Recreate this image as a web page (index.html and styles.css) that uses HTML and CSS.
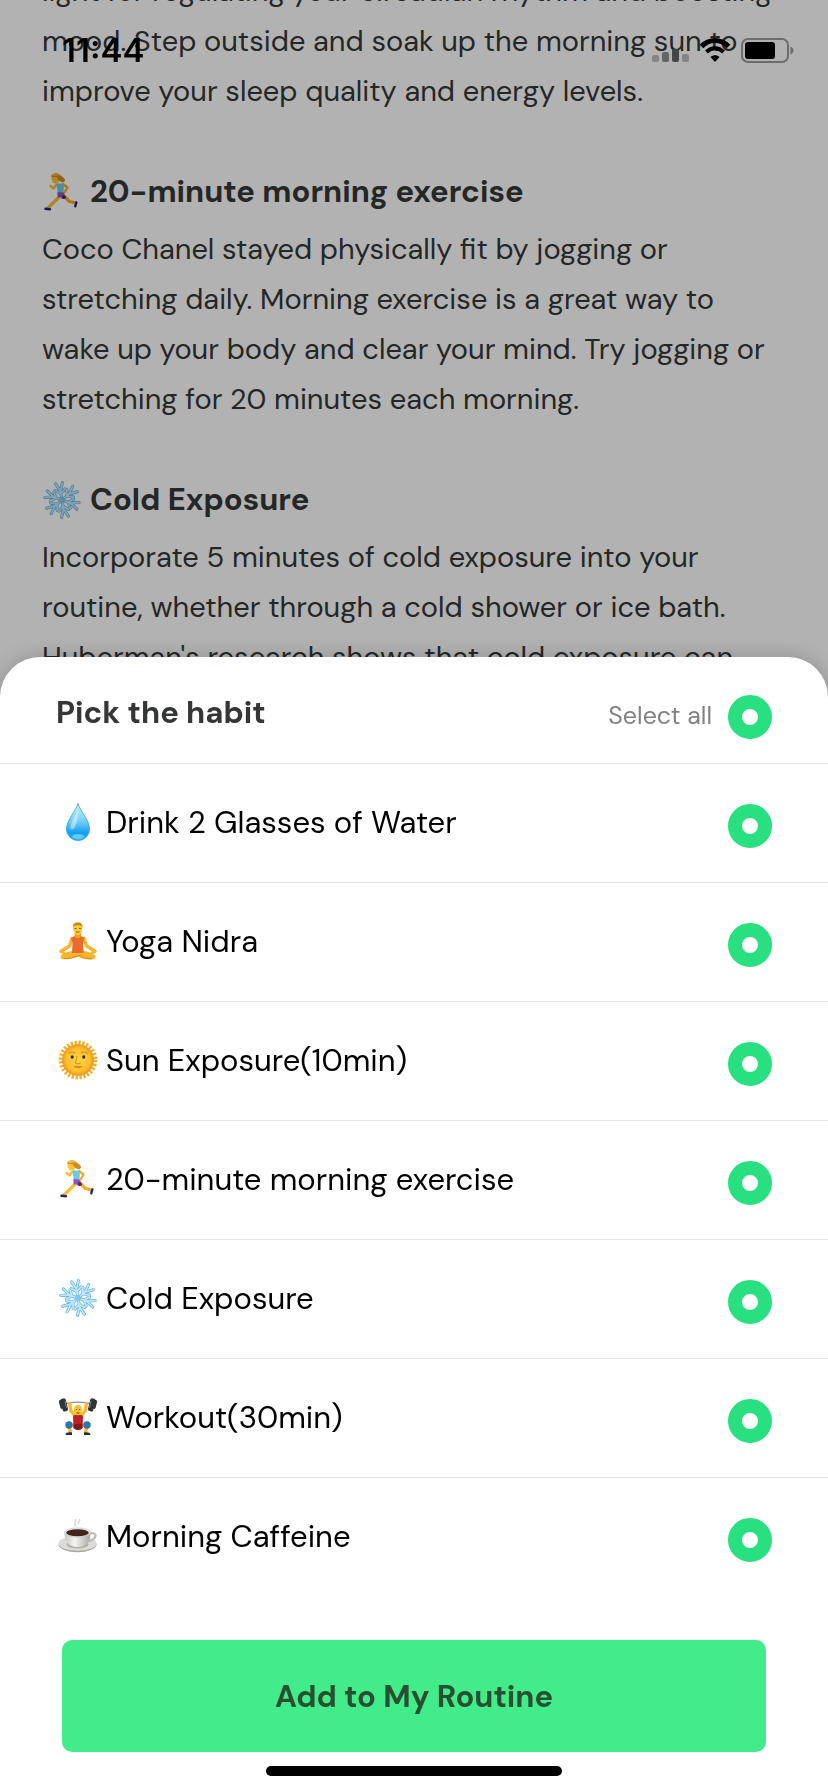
FILE: index.html
```html
<!DOCTYPE html>
<html lang="en">
<head>
  <meta charset="UTF-8" />
  <meta name="viewport" content="width=device-width, initial-scale=1.0" />
  <title>Pick the habit</title>
  <link rel="stylesheet" href="styles.css">
</head>
<body>
  <!-- Icon set -->
  <svg class="sprite" aria-hidden="true">
    <defs>
      <linearGradient id="dropFill" x1="0" y1="0" x2="0" y2="1">
        <stop offset="0" stop-color="#d9f3fd" />
        <stop offset="0.5" stop-color="#6fcbf7" />
        <stop offset="0.8" stop-color="#129df0" />
        <stop offset="1" stop-color="#35b9f8" />
      </linearGradient>
      <radialGradient id="sunFill">
        <stop offset="0" stop-color="#ffd54a" />
        <stop offset="0.75" stop-color="#fdbf2d" />
        <stop offset="1" stop-color="#ee981d" />
      </radialGradient>
      <linearGradient id="cupFill">
        <stop offset="0" stop-color="#c9c7c1" />
        <stop offset="0.4" stop-color="#f6f5f2" />
        <stop offset="1" stop-color="#aaa7a0" />
      </linearGradient>
    </defs>

    <symbol id="drop" viewBox="0 0 40 40">
      <path d="M20 1.500C22 9 31.500 18 31.500 27a11.500 11.500 0 0 1-23 0C8.500 18 18 9 20 1.500z" fill="url(#dropFill)" stroke="#1ba1e8" stroke-width="0.8" />
      <path d="M19.500 8C18 14 12.500 20 12.500 26c0 3 4 1 5-2 1.500-5 3-9 2-16z" fill="#fff" opacity="0.45" />
      <ellipse cx="20" cy="34.500" rx="6" ry="2.500" fill="#6bd3fb" opacity="0.8" />
    </symbol>

    <symbol id="yoga" viewBox="0 0 40 40">
      <g fill="none" stroke="#f5b52c" stroke-linecap="round" stroke-linejoin="round">
        <path d="M14 17.500L11.500 25 3.500 30" stroke-width="3.400" />
        <path d="M26 17.500L28.500 25 36.500 30" stroke-width="3.400" />
        <path d="M2.500 30.500l3.500 1.500M37.500 30.500L34 32" stroke-width="2.600" />
        <path d="M14 32C9 33 5 34 4.500 36c5 1.500 11-1 17-3" stroke-width="4" />
        <path d="M26 32c5 1 9 2 9.500 4-5 1.500-11-.5-15-2.500" stroke-width="4" />
      </g>
      <path d="M6 37.500c8 .5 12-3 18-3.500M34 37.500c-5 .5-8-.5-11-2" stroke="#d88913" stroke-width="0.900" fill="none" />
      <path d="M16.500 12h6.500v6h-6.500z" fill="#eda51f" />
      <path d="M13 17l3.500-2c1 3 5.500 3 6.500 0l3.500 2-1.500 5 .5 10H14l.5-10z" fill="#ea6a2c" />
      <path d="M15 5.500c0-5.500 9.500-5.500 9.500 0 0 4.500-1.500 8.500-4.700 8.500S15 10 15 5.500z" fill="#fdca36" />
      <path d="M15 5.500C14.500 0 25 0 24.500 5.500 22.500 3.500 18 4 15 5.500z" fill="#c78a18" />
      <path d="M16.500 7.500h2M21 7.500h2M18 11h3.500" stroke="#7b4d10" stroke-width="0.900" />
    </symbol>

    <symbol id="sun" viewBox="0 0 40 40">
      <circle cx="20" cy="20" r="17.300" fill="none" stroke="#f5ad28" stroke-width="4.200" stroke-dasharray="2.200 1.682" />
      <circle cx="20" cy="20" r="15.600" fill="url(#sunFill)" stroke="#e99a20" stroke-width="0.700" />
      <path d="M10.500 13.500c2-2 5-2 6.500-.5M23 13c2-1.500 5-1.500 6.500.5" stroke="#d78b16" stroke-width="1.100" fill="none" />
      <ellipse cx="14" cy="17" rx="2.600" ry="1.500" fill="#ffe9a8" />
      <ellipse cx="26" cy="17" rx="2.600" ry="1.500" fill="#ffe9a8" />
      <circle cx="14.200" cy="17" r="1.700" fill="#3c2a15" />
      <circle cx="25.800" cy="17" r="1.700" fill="#3c2a15" />
      <path d="M19 16l-1.500 7c1 1.200 4 1.200 5 0" stroke="#dc8c16" stroke-width="1.100" fill="none" />
      <path d="M15 26.500c3 2 7 2 10 0-3-.6-7-.6-10 0z" fill="#d98a1c" />
    </symbol>

    <symbol id="runner" viewBox="0 0 40 40">
      <g fill="none" stroke-linecap="round" stroke-linejoin="round">
        <path d="M22 24l5.500 5.500 6.500 1.500" stroke="#f3ac27" stroke-width="3.200" />
        <path d="M18.500 24l-7 6.500-5.500 5.500" stroke="#fbbe31" stroke-width="3.200" />
        <path d="M21 12l4.500 3.500-3 5" stroke="#f3ac27" stroke-width="2.400" />
        <path d="M14 13l-2.500 3.500L8.500 14" stroke="#fbbe31" stroke-width="2.400" />
        <path d="M3.500 36.800l4.500.4M34.300 30.500l-1 3.800" stroke="#26236e" stroke-width="2.400" />
      </g>
      <path d="M14.500 11l7.500 1-.5 9-6-.5c.5-3-1.500-6-1-9.500z" fill="#6dc8e2" />
      <path d="M15.500 20l6 .5 2.500 5-3.500 1.500-2.500-2-2.500 1z" fill="#8d55bd" />
      <path d="M20 23l3.500 1 .5 2.500-3.500.5z" fill="#512070" />
      <path d="M9.500 5c0-3.500 7-4 8.500 0 .5 4-2 6.500-5 6.500-2.500 0-3.500-3-3.500-6.500z" fill="#fcc238" />
      <path d="M9 4c2-4 8-3.500 9.500-.5 2 1.500 4 2 4.500 4.500-.3 2.500-3 3-4.500 1.500C15.500 8.500 16 6 14.500 5 12 4.500 10.500 6 9 4z" fill="#cf8b1b" />
      <path d="M9 4c2-4 8-3.500 9.500-.5C15 3 12 4.500 9 4z" fill="#f2b93b" />
    </symbol>

    <symbol id="snow" viewBox="0 0 40 40">
      <g fill="none" stroke-linecap="round">
        <g stroke="#5aaedd" stroke-width="3">
          <path id="arm" d="M20 20V10M20 11l-3.500-8M20 11l3.500-8M20 13.500l-5-4M20 13.500l5-4" transform="rotate(-10 20 20)" />
          <use href="#arm" transform="rotate(60 20 20)" />
          <use href="#arm" transform="rotate(120 20 20)" />
          <use href="#arm" transform="rotate(180 20 20)" />
          <use href="#arm" transform="rotate(240 20 20)" />
          <use href="#arm" transform="rotate(300 20 20)" />
        </g>
        <g stroke="#bfe8fc" stroke-width="1.800">
          <path id="armLight" d="M20 20V10M20 11l-3.500-8M20 11l3.500-8M20 13.500l-5-4M20 13.500l5-4" transform="rotate(-10 20 20)" />
          <use href="#armLight" transform="rotate(60 20 20)" />
          <use href="#armLight" transform="rotate(120 20 20)" />
          <use href="#armLight" transform="rotate(180 20 20)" />
          <use href="#armLight" transform="rotate(240 20 20)" />
          <use href="#armLight" transform="rotate(300 20 20)" />
        </g>
      </g>
      <circle cx="20" cy="20" r="3" fill="#7cc8ee" />
    </symbol>

    <symbol id="lifter" viewBox="0 0 40 40">
      <path d="M5 7.500C14 4.500 26 4.500 35 7.500" fill="none" stroke="#8b8f94" stroke-width="1.600" />
      <g fill="none" stroke="#f8b92f" stroke-width="3.400" stroke-linecap="round" stroke-linejoin="round">
        <path d="M11.500 6.500L13 14l4 5" />
        <path d="M28.500 6.500L27 14l-4 5" />
        <path d="M17 28l-6 .5 1.500 7" />
        <path d="M23 28l6 .5-1.500 7" />
      </g>
      <g fill="#30353a">
        <rect x="3.500" y="1.500" width="5.500" height="13" rx="2" transform="rotate(-14 6 8)" />
        <rect x="31" y="1.500" width="5.500" height="13" rx="2" transform="rotate(14 34 8)" />
        <rect x="1.500" y="3" width="3" height="9" rx="1.500" transform="rotate(-14 3 7)" />
        <rect x="35.500" y="3" width="3" height="9" rx="1.500" transform="rotate(14 37 7)" />
      </g>
      <path d="M7 4l1.500 7M33 4l-1.500 7" stroke="#747a80" stroke-width="1" />
      <path d="M15 19c3-2 7-2 10 0l-.5 12c-2 2.500-7 2.500-9 0z" fill="#bd2026" />
      <path d="M16 27h8l.5 4c-3 2.500-6 2.500-9 0z" fill="#841720" />
      <ellipse cx="20" cy="13" rx="4.200" ry="5.200" fill="#fdc432" />
      <path d="M18 12.500h1M21 12.500h1M18.500 16h3" stroke="#70470f" stroke-width="1" />
      <circle cx="11" cy="28" r="3.700" fill="#2b75ae" />
      <circle cx="29" cy="28" r="3.700" fill="#2b75ae" />
      <path d="M7.500 38c0-2.500 3-3 6.500-2.500v2.500zM32.500 38c0-2.500-3-3-6.500-2.500v2.500z" fill="#22313d" />
    </symbol>

    <symbol id="coffee" viewBox="0 0 40 40">
      <ellipse cx="19.500" cy="28.500" rx="19" ry="7.800" fill="#aaa79f" />
      <ellipse cx="19.500" cy="27.500" rx="19" ry="7.300" fill="#dddbd6" />
      <ellipse cx="19.500" cy="28.500" rx="11" ry="4" fill="#b3b0a9" />
      <path d="M31 18c6-2 8 1 5.500 4-1.500 2-4 3-7 3.500" fill="none" stroke="#b9b7b1" stroke-width="2" />
      <path d="M6.500 16.500c0 8 3 14.500 13 14.500s13-6.500 13-14.500z" fill="url(#cupFill)" />
      <ellipse cx="19.500" cy="16.500" rx="13" ry="4.600" fill="#efeeea" stroke="#bbb8b1" stroke-width="0.600" />
      <ellipse cx="19.500" cy="16.800" rx="11.400" ry="3.500" fill="#42241c" />
      <path d="M18 10c-4-3 2-4-1-7M21 8c-3-2 3-3 0-5" fill="none" stroke="#d5d7d8" stroke-width="1.300" />
    </symbol>
  </svg>

  <header class="status-bar">
    <span class="time">11:44</span>
    <div class="status-icons">
      <svg class="signal" viewBox="0 0 37 24" aria-hidden="true">
        <rect x="0" y="17" width="7" height="7" rx="2" fill="#858585" />
        <rect x="10" y="14" width="7" height="10" rx="2" fill="#656565" />
        <rect x="20" y="11" width="7" height="13" rx="2" fill="#454545" />
        <rect x="30" y="16" width="7" height="8" rx="2" fill="#858585" />
      </svg>
      <svg class="wifi" viewBox="0 0 32 24" aria-hidden="true">
        <path d="M2.500 8.500C10 .5 22 .5 29.500 8.500" fill="none" stroke="#000" stroke-width="5" />
        <path d="M7.500 14C12.500 9 19.500 9 24.500 14" fill="none" stroke="#000" stroke-width="4" />
        <path d="M16 24l-4.500-5c2.500-2.400 6.500-2.400 9 0z" />
      </svg>
      <svg class="battery" viewBox="0 0 53 25" aria-hidden="true">
        <rect x="1" y="1" width="46" height="23" rx="6" fill="none" stroke="#6d6d6d" stroke-width="2" />
        <rect x="4" y="4" width="30" height="17" rx="3" />
        <path d="M49.500 8.500c4 1.500 4 6.500 0 8z" fill="#6d6d6d" />
      </svg>
    </div>
  </header>

  <main class="article">
    <p>light for regulating your circadian rhythm and boosting<br>mood. Step outside and soak up the morning sun to<br>improve your sleep quality and energy levels.</p>

    <h2><svg class="icon" aria-hidden="true"><use href="#runner" /></svg>20-minute morning exercise</h2>
    <p>Coco Chanel stayed physically fit by jogging or<br>stretching daily. Morning exercise is a great way to<br>wake up your body and clear your mind. Try jogging or<br>stretching for 20 minutes each morning.</p>

    <h2><svg class="icon" aria-hidden="true"><use href="#snow" /></svg>Cold Exposure</h2>
    <p>Incorporate 5 minutes of cold exposure into your<br>routine, whether through a cold shower or ice bath.<br>Huberman's research shows that cold exposure can</p>
  </main>

  <div class="overlay"></div>

  <!-- Bottom sheet -->
  <form class="sheet">
    <div class="sheet-header">
      <h1>Pick the habit</h1>
      <label class="select-all"><span>Select all</span><input class="dot" type="checkbox" checked></label>
    </div>

    <label class="habit">
      <svg class="icon" aria-hidden="true"><use href="#drop" /></svg>
      <span class="name">Drink 2 Glasses of Water</span>
      <input class="dot" type="checkbox" checked>
    </label>
    <label class="habit">
      <svg class="icon" aria-hidden="true"><use href="#yoga" /></svg>
      <span class="name">Yoga Nidra</span>
      <input class="dot" type="checkbox" checked>
    </label>
    <label class="habit">
      <svg class="icon" aria-hidden="true"><use href="#sun" /></svg>
      <span class="name">Sun Exposure(10min)</span>
      <input class="dot" type="checkbox" checked>
    </label>
    <label class="habit">
      <svg class="icon" aria-hidden="true"><use href="#runner" /></svg>
      <span class="name">20-minute morning exercise</span>
      <input class="dot" type="checkbox" checked>
    </label>
    <label class="habit">
      <svg class="icon" aria-hidden="true"><use href="#snow" /></svg>
      <span class="name">Cold Exposure</span>
      <input class="dot" type="checkbox" checked>
    </label>
    <label class="habit">
      <svg class="icon" aria-hidden="true"><use href="#lifter" /></svg>
      <span class="name">Workout(30min)</span>
      <input class="dot" type="checkbox" checked>
    </label>
    <label class="habit">
      <svg class="icon" aria-hidden="true"><use href="#coffee" /></svg>
      <span class="name">Morning Caffeine</span>
      <input class="dot" type="checkbox" checked>
    </label>

    <button class="add-btn" type="button">Add to My Routine</button>
    <div class="home-bar"></div>
  </form>
</body>
</html>
```
FILE: styles.css
```css
* {
  box-sizing: border-box;
}

body {
  margin: 0;
  height: 100vh;
  overflow: hidden;
  background: #fff;
  color: #353737;
  font-family: "DM Sans", Lato, sans-serif;
}

.sprite {
  position: absolute;
  width: 0;
  height: 0;
}

/* Status bar, stays above the dimmed page */
.status-bar {
  position: fixed;
  top: 0;
  left: 0;
  right: 0;
  z-index: 3;
  display: flex;
  justify-content: space-between;
  align-items: center;
  height: 100px;
  padding: 0 34px 0 62px;
  color: #000;
}

.time {
  font-family: Inter, sans-serif;
  font-size: 33px;
  font-weight: 600;
}

.status-icons {
  display: flex;
  align-items: center;
  gap: 10px;
}

.signal {
  width: 37px;
  height: 24px;
}

.wifi {
  width: 32px;
  height: 24px;
}

.battery {
  width: 53px;
  height: 25px;
}

/* Article, scrolled part way */
.article {
  margin-top: -34px;
  padding: 0 42px;
}

.article p {
  margin: 0;
  font-size: 29px;
  line-height: 50px;
  white-space: nowrap;
}

.article h2 {
  display: flex;
  align-items: center;
  gap: 8px;
  margin: 56px 0 12px;
  font-size: 31px;
  line-height: 40px;
}

.icon {
  flex: none;
  width: 40px;
  height: 40px;
}

.overlay {
  position: fixed;
  inset: 0;
  z-index: 1;
  background: rgba(0, 0, 0, 0.3);
}

/* Sheet */
.sheet {
  position: fixed;
  left: 0;
  right: 0;
  bottom: 0;
  z-index: 2;
  display: flex;
  flex-direction: column;
  padding-bottom: 16px;
  border-radius: 40px 40px 0 0;
  background: #fff;
  box-shadow: 0 0 20px rgba(0, 0, 0, 0.2);
}

.sheet-header {
  display: flex;
  justify-content: space-between;
  align-items: center;
  height: 106px;
  padding: 14px 56px 0;
}

.sheet-header h1 {
  margin: 0;
  padding-bottom: 8px;
  font-size: 31px;
  line-height: 40px;
}

.select-all {
  display: flex;
  align-items: center;
  gap: 16px;
  color: #7f8182;
  font-size: 25px;
}

.select-all span {
  padding-bottom: 4px;
}

.habit {
  display: flex;
  align-items: center;
  gap: 8px;
  height: 119px;
  padding: 6px 56px 0 58px;
  border-top: 1px solid #e6e6e6;
  color: #000;
  font-size: 31px;
}

.habit .icon {
  margin-bottom: 8px;
}

.name {
  flex: 1;
  padding-bottom: 6px;
  line-height: 40px;
}

.dot {
  appearance: none;
  width: 44px;
  height: 44px;
  margin: 0;
  border: 14px solid #28e07f;
  border-radius: 50%;
  background: #fff;
}

.add-btn {
  height: 112px;
  margin: 44px 62px 14px;
  border: none;
  border-radius: 10px;
  background: #43ec8a;
  color: #28502f;
  font-family: inherit;
  font-size: 31px;
  font-weight: bold;
}

.home-bar {
  align-self: center;
  width: 296px;
  height: 10px;
  border-radius: 5px;
  background: #000;
}
```
